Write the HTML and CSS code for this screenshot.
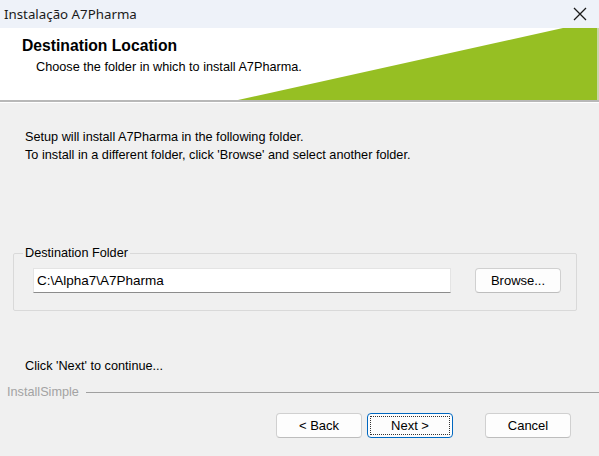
FILE: index.html
```html
<!DOCTYPE html>
<html lang="pt">
<head>
    <meta charset="UTF-8">
    <title>Instalação A7Pharma</title>
    <link rel="stylesheet" href="styles.css">
</head>
<body>

    <div class="window">
        <div class="titlebar">
            <span class="title">Instalação A7Pharma</span>
            <svg class="close" width="14" height="14" viewBox="0 0 14 14">
                <path d="M1 1 L13 13 M13 1 L1 13" stroke="#1a1a1a" stroke-width="1.3" fill="none"/>
            </svg>
        </div>

        <div class="header">
            <div class="header-text">
                <h1>Destination Location</h1>
                <p>Choose the folder in which to install A7Pharma.</p>
            </div>
            <!-- faixa verde do canto -->
            <svg class="header-art" width="599" height="72" viewBox="0 0 599 72">
                <polygon points="238,72 563,0 597,0 597,72" fill="#96bf23"/>
                <rect x="597" y="0" width="2" height="72" fill="#c9d6a8"/>
            </svg>
        </div>

        <div class="content">
            <p class="intro">Setup will install A7Pharma in the following folder.<br>
            To install in a different folder, click 'Browse' and select another folder.</p>

            <fieldset class="groupbox">
                <legend>Destination Folder</legend>
                <div class="folder-row">
                    <input type="text" class="folder" value="C:\Alpha7\A7Pharma">
                    <button class="btn browse">Browse...</button>
                </div>
            </fieldset>

            <p class="hint">Click 'Next' to continue...</p>
        </div>

        <div class="brand">
            <span>InstallSimple</span>
            <div class="brand-line"></div>
        </div>

        <div class="buttons">
            <button class="btn">&lt; Back</button>
            <button class="btn default"><span>Next &gt;</span></button>
            <button class="btn cancel">Cancel</button>
        </div>
    </div>

</body>
</html>
```

FILE: styles.css
```css
body {
    margin: 0;
    font-family: "Liberation Sans", Arial, sans-serif;
    font-size: 12.7px;
    color: #000;
    background: #f0f0f0;
}

.window {
    width: 599px;
    height: 456px;
    display: flex;
    flex-direction: column;
    background: #f0f0f0;
    overflow: hidden;
}

.titlebar {
    height: 28px;
    flex: none;
    background: #eef2f9;
    display: flex;
    align-items: center;
    justify-content: space-between;
    padding: 0 12px 0 4px;
}

.title {
    font-family: "Noto Sans", "Open Sans", sans-serif;
    font-size: 13.3px;
    color: #1a1a1a;
}

.header {
    height: 72px;
    flex: none;
    background: #fff;
    position: relative;
    border-bottom: 2px solid #b8b8b8;
    box-shadow: 0 1px 0 #fff;
}

.header-text {
    position: relative;
    z-index: 1;
    padding: 9px 0 0 22px;
}

.header h1 {
    margin: 0;
    font-size: 15.7px;
    font-weight: bold;
    color: #000;
}

.header p {
    margin: 5px 0 0 14px;
}

.header-art {
    position: absolute;
    top: 0;
    left: 0;
}

.content {
    padding: 26px 0 0 25px;
}

.intro {
    margin: 0;
    line-height: 18px;
}

.groupbox {
    margin: 82px 22px 0 -12px;
    padding: 8px 15px 17px 19px;
    border: 1px solid #d9d9d9;
    border-radius: 2px;
}

.groupbox legend {
    padding: 0 2px;
    margin-left: -10px;
}

.folder-row {
    display: flex;
    align-items: center;
    justify-content: space-between;
}

.folder {
    width: 418px;
    height: 25px;
    box-sizing: border-box;
    border: 1px solid #e4e4e4;
    border-bottom: 1px solid #8c8c8c;
    background: #fff;
    font-family: "Liberation Sans", Arial, sans-serif;
    font-size: 13.5px;
    padding: 0 3px;
    margin: 0;
}

.btn {
    width: 86px;
    height: 25px;
    box-sizing: border-box;
    background: #fdfdfd;
    border: 1px solid #d0d0d0;
    border-bottom-color: #bdbdbd;
    border-radius: 4px;
    font-family: "Liberation Sans", Arial, sans-serif;
    font-size: 13px;
    color: #000;
    padding: 0;
    margin: 0;
}

.hint {
    margin: 48px 0 0 0;
}

.brand {
    display: flex;
    align-items: center;
    margin: 12px 0 0 7px;
    color: #a3a3a3;
}

.brand-line {
    flex: 1;
    height: 1px;
    background: #a0a0a0;
    margin-left: 7px;
}

.buttons {
    display: flex;
    margin: 14px 0 0 276px;
}

.btn.default {
    margin-left: 5px;
    border: 1px solid #0067c0;
    padding: 2px;
}

.btn.default span {
    display: flex;
    align-items: center;
    justify-content: center;
    height: 100%;
    border: 1px dotted #333;
    box-sizing: border-box;
}

.btn.cancel {
    margin-left: 32px;
}
```
